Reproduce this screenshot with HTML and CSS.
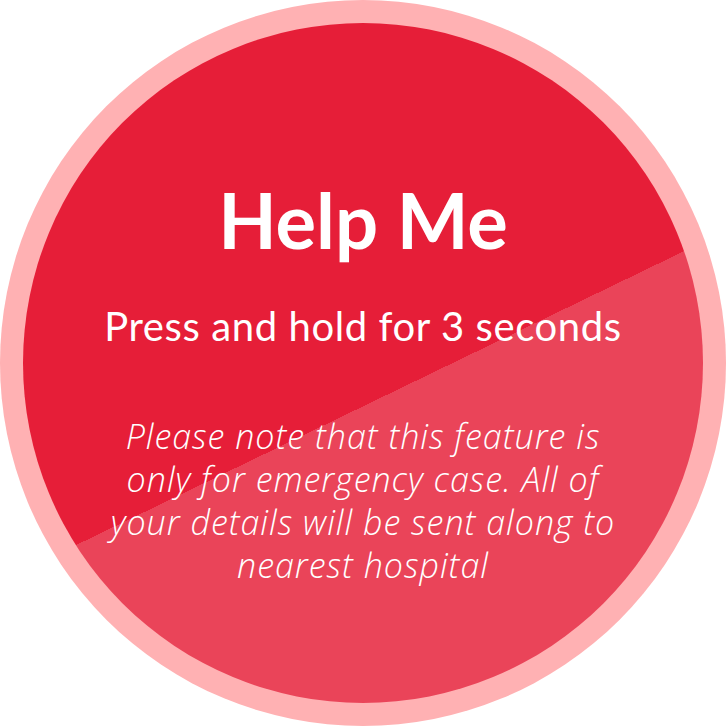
FILE: index.html
```html
<!DOCTYPE html>
<html lang="en">
<head>
<meta charset="utf-8">
<title>Help Me</title>
<link rel="stylesheet" href="styles.css">
</head>
<body>
<div class="ring">
  <button class="sos" type="button">
    <span class="title">Help Me</span>
    <span class="hint">Press and hold for 3 seconds</span>
    <span class="note">Please note that this feature is<br>only for emergency case. All of<br>your details will be sent along to<br>nearest hospital</span>
  </button>
</div>
</body>
</html>
```
FILE: styles.css
```css
* { box-sizing: border-box; }
html, body { margin: 0; padding: 0; background: #ffffff; }
body { width: 726px; height: 726px; }

.ring {
  width: 726px;
  height: 726px;
  border-radius: 50%;
  background: #ffb1b3;
  padding: 23px;
}

.sos {
  width: 680px;
  height: 680px;
  border: 0;
  margin: 0;
  border-radius: 50%;
  background: linear-gradient(154.2deg, #e61e38 0%, #e61e38 54.3%, #ea4459 54.3%, #ea4459 100%);
  display: flex;
  flex-direction: column;
  align-items: center;
  padding: 159px 0 0 0;
  color: #ffffff;
  font-family: Lato, "Open Sans", sans-serif;
  text-align: center;
  cursor: pointer;
}

.title {
  font-size: 76px;
  line-height: 76px;
  font-weight: 700;
}

.hint {
  margin-top: 49px;
  font-size: 40px;
  line-height: 39px;
  font-weight: 400;
  letter-spacing: 0.6px;
}

.note {
  margin-top: 69px;
  font-family: "Open Sans", Lato, sans-serif;
  font-size: 34px;
  line-height: 43px;
  font-weight: 300;
  font-style: italic;
  letter-spacing: 1px;
}
```
